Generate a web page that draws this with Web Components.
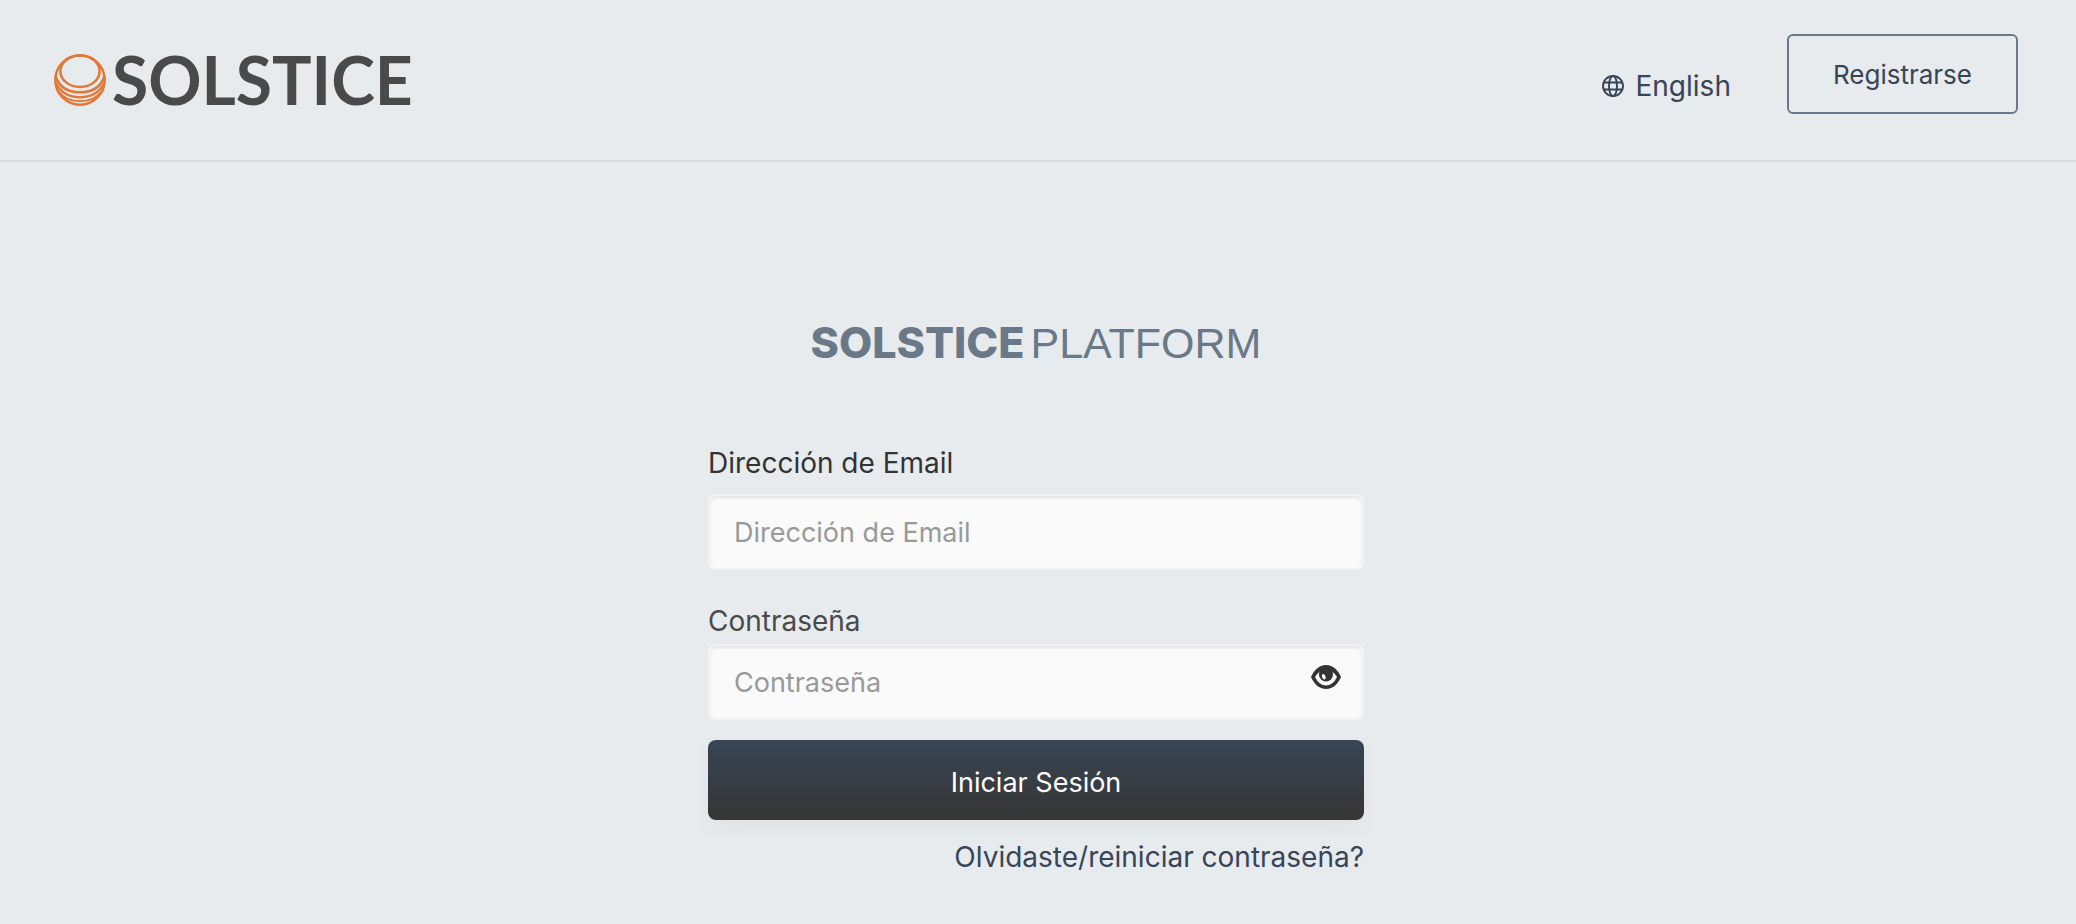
<!DOCTYPE html>
<html lang="es">
<head>
<meta charset="utf-8">
<meta name="viewport" content="width=device-width, initial-scale=1">
<title>Solstice Platform</title>
<style>
  body {
    margin: 0;
    min-height: 100vh;
    background: #e7ebee;
    color: #333;
    font-family: Inter, "Liberation Sans", sans-serif;
    font-size: 28px;
    --slate: #384556;
    --slate-light: #6a7888;
    --gutter: 4px;
  }
</style>
</head>
<body>
<site-header>
  <brand-logo slot="brand">SOLSTICE</brand-logo>
  <language-link>English</language-link>
  <outline-button>Registrarse</outline-button>
</site-header>
<login-panel></login-panel>

<script>
class SiteHeader extends HTMLElement {
  constructor() {
    super();
    const shadow = this.attachShadow({ mode: "open" });
    shadow.innerHTML = `
      <style>
        :host {
          display: block;
          padding-right: var(--gutter);
          border-bottom: 2px solid #d7dbe2;
        }

        header {
          display: flex;
          align-items: flex-start;
          justify-content: space-between;
          padding: 34px 54px 46px;
        }

        nav {
          display: flex;
          align-items: flex-end;
          gap: 56px;
        }
      </style>

      <header>
        <slot name="brand"></slot>
        <nav><slot></slot></nav>
      </header>
    `;
  }
}

class BrandLogo extends HTMLElement {
  constructor() {
    super();
    const shadow = this.attachShadow({ mode: "open" });
    shadow.innerHTML = `
      <style>
        :host {
          display: block;
          padding-top: 20px;
        }

        a {
          display: flex;
          align-items: center;
          gap: 6px;
          height: 52px;
          color: #4a4a4a;
          font-family: Lato, "Liberation Sans", sans-serif;
          font-size: 66px;
          font-weight: 700;
          line-height: 52px;
          text-decoration: none;
        }

        svg {
          width: 52px;
          height: 52px;
        }
      </style>

      <a href="#">
        <svg viewBox="0 0 52 52" fill="none" stroke="#e07838" stroke-width="2.500" aria-hidden="true">
          <circle cx="26" cy="26" r="24.700"/>
          <ellipse cx="26" cy="17.200" rx="19.600" ry="15.800"/>
          <path d="M1.500 22C5 33 14 38.300 26 38.300S47 33 50.500 22"/>
          <path d="M2 29.500C7 39 15 43.200 26 43.200S45 39 50 29.500"/>
          <path d="M5 38C10 44.500 17 47.200 26 47.200S42 44.500 47 38" stroke-width="2"/>
        </svg>
        <slot></slot>
      </a>
    `;
  }
}

class LanguageLink extends HTMLElement {
  constructor() {
    super();
    const shadow = this.attachShadow({ mode: "open" });
    shadow.innerHTML = `
      <style>
        :host {
          display: block;
        }

        a {
          display: flex;
          align-items: center;
          gap: 12px;
          color: var(--slate);
          line-height: 56px;
          text-decoration: none;
        }

        svg {
          width: 22px;
          height: 22px;
        }
      </style>

      <a href="#">
        <svg viewBox="0 0 22 22" fill="none" stroke="currentColor" stroke-width="1.9" aria-hidden="true">
          <circle cx="11" cy="11" r="10"/>
          <ellipse cx="11" cy="11" rx="4" ry="10"/>
          <path d="M1.700 7.500H20.300M1.700 14.500H20.300"/>
        </svg>
        <slot></slot>
      </a>
    `;
  }
}

class OutlineButton extends HTMLElement {
  constructor() {
    super();
    const shadow = this.attachShadow({ mode: "open" });
    shadow.innerHTML = `
      <style>
        :host {
          display: block;
        }

        button {
          height: 80px;
          padding: 0 44px;
          border: 2px solid var(--slate-light);
          border-radius: 6px;
          background: transparent;
          color: var(--slate);
          font-family: inherit;
          font-size: 26px;
          cursor: pointer;
        }
      </style>

      <button type="button"><slot></slot></button>
    `;
  }
}

class LoginPanel extends HTMLElement {
  constructor() {
    super();
    const shadow = this.attachShadow({ mode: "open" });
    shadow.innerHTML = `
      <style>
        :host {
          display: block;
          padding-right: var(--gutter);
        }

        main {
          box-sizing: border-box;
          width: 100%;
          max-width: 656px;
          margin: 0 auto;
          padding: 154px 0 40px;
        }

        h1 {
          display: flex;
          justify-content: center;
          align-items: baseline;
          gap: 6px;
          margin: 0 0 75px;
          color: var(--slate-light);
          font-size: 43px;
          font-weight: 400;
          line-height: 52px;
        }

        strong {
          font-weight: 800;
        }

        h1 span {
          font-family: "Liberation Sans", Arial, sans-serif;
        }

        form {
          display: flex;
          flex-direction: column;
        }

        form-field + form-field {
          margin-top: 32px;
        }

        .submit {
          height: 80px;
          margin: 20px 0;
          padding: 4px 0 0;
          border: none;
          border-radius: 8px;
          background: linear-gradient(#374555, #373635);
          box-shadow: 0 8px 20px rgba(0, 0, 0, 0.04);
          color: #fff;
          font-family: inherit;
          font-size: 27px;
          cursor: pointer;
        }

        .forgot {
          align-self: flex-end;
          color: var(--slate);
          line-height: 34px;
          text-decoration: none;
        }
      </style>

      <main>
        <h1><strong>SOLSTICE</strong><span>PLATFORM</span></h1>
        <form>
          <form-field label="Dirección de Email" type="email"></form-field>
          <form-field label="Contraseña" type="password"></form-field>
          <button class="submit" type="submit">Iniciar Sesión</button>
          <a class="forgot" href="#">Olvidaste/reiniciar contraseña?</a>
        </form>
      </main>
    `;
    shadow.querySelector("form").addEventListener("submit", (e) => e.preventDefault());
  }
}

class FormField extends HTMLElement {
  constructor() {
    super();
    const shadow = this.attachShadow({ mode: "open" });
    shadow.innerHTML = `
      <style>
        :host {
          display: block;
        }

        label {
          display: block;
          margin-bottom: 12px;
          line-height: 38px;
        }

        :host([type="password"]) label {
          margin-bottom: 4px;
          color: #4a4a4a;
        }

        .box {
          display: flex;
          box-sizing: border-box;
          height: 76px;
          padding: 0 21px 0 24px;
          border: 2px solid #f3f3f3;
          border-radius: 8px;
          background: #fafafa;
          box-shadow: inset 0 2px 3px rgba(0, 0, 0, 0.09);
        }

        .box:focus-within {
          border-color: var(--slate-light);
        }

        input {
          flex: 1;
          min-width: 0;
          padding: 0;
          border: none;
          outline: none;
          background: transparent;
          color: #333;
          font-family: inherit;
          font-size: 27px;
        }

        input::placeholder {
          color: #999;
          opacity: 1;
        }

        button {
          display: flex;
          align-items: center;
          padding: 0 0 10px;
          border: none;
          background: none;
          color: #333;
          cursor: pointer;
        }

        button[hidden] {
          display: none;
        }

        svg {
          width: 30px;
          height: 24px;
        }
      </style>

      <label for="field"></label>
      <div class="box">
        <input id="field">
        <button type="button" aria-label="Mostrar contraseña" hidden>
          <svg viewBox="0 0 30 24" aria-hidden="true">
            <path d="M0 12C3 5 8 0 15 0S27 5 30 12C27 19 22 24 15 24S3 19 0 12Z" fill="currentColor"/>
            <path d="M4 12Q6 8.500 9 6.500H21Q24 8.500 26 12Q22 20.500 15 20.500T4 12Z" fill="#fafafa"/>
            <circle cx="15" cy="9.500" r="7" fill="currentColor"/>
            <ellipse cx="12.800" cy="11.800" rx="1.700" ry="2.800" fill="#fafafa" transform="rotate(-25 12.800 11.800)"/>
          </svg>
        </button>
      </div>
    `;

    this._label = shadow.querySelector("label");
    this._input = shadow.querySelector("input");
    this._toggle = shadow.querySelector("button");
    this._onToggle = this._onToggle.bind(this);
  }

  // Show or hide the typed password
  _onToggle() {
    this._input.type = this._input.type === "password" ? "text" : "password";
  }

  connectedCallback() {
    const label = this.getAttribute("label");
    const type = this.getAttribute("type") || "text";
    this._label.textContent = label;
    this._input.placeholder = label;
    this._input.type = type;
    this._toggle.hidden = type !== "password";
    this._toggle.addEventListener("click", this._onToggle);
  }

  disconnectedCallback() {
    this._toggle.removeEventListener("click", this._onToggle);
  }
}

customElements.define("site-header", SiteHeader);
customElements.define("brand-logo", BrandLogo);
customElements.define("language-link", LanguageLink);
customElements.define("outline-button", OutlineButton);
customElements.define("form-field", FormField);
customElements.define("login-panel", LoginPanel);
</script>
</body>
</html>
